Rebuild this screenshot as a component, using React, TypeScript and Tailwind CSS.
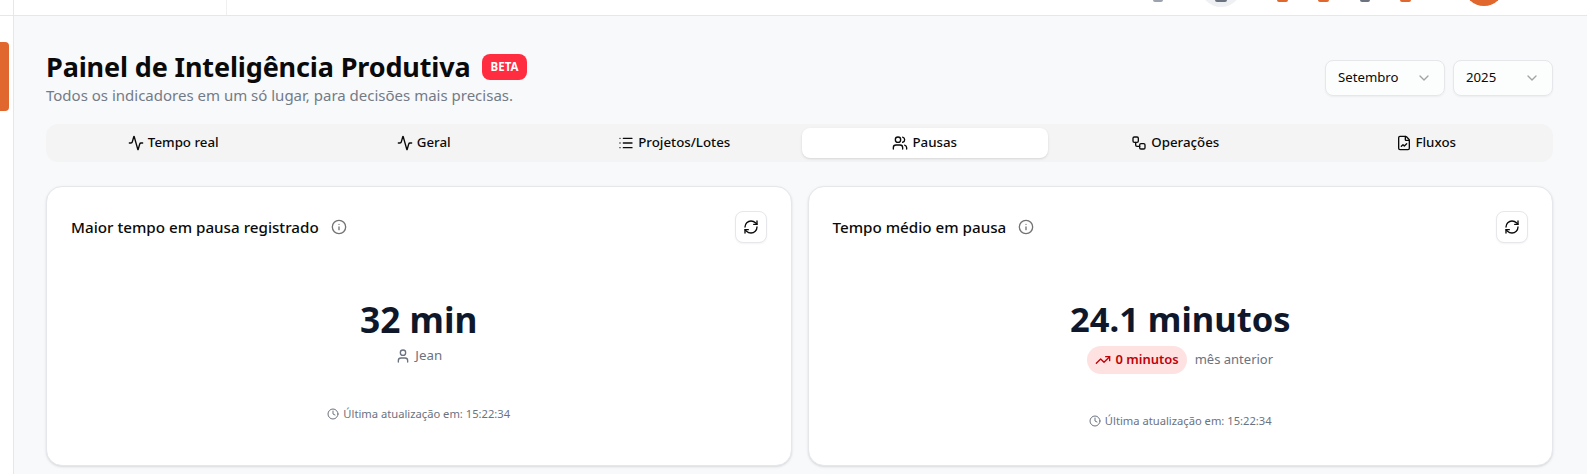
import { Activity, ChevronDown, Clock, FileChartLine, Info, List, RefreshCw, TrendingUp, User, Users, Workflow } from 'lucide-react';

const font = "font-['Noto_Sans','Open_Sans',sans-serif]";

const tabs = [
    { label: 'Tempo real', icon: Activity },
    { label: 'Geral', icon: Activity },
    { label: 'Projetos/Lotes', icon: List },
    { label: 'Pausas', icon: Users, active: true },
    { label: 'Operações', icon: Workflow },
    { label: 'Fluxos', icon: FileChartLine },
];

const Select = ({ value, width }: { value: string; width: string }) => (
    <div className={`${width} h-[36px] flex items-center justify-between px-3 bg-white/60 border border-[#e5e7eb] rounded-lg shadow-xs text-[13.2px] text-[#0a0a0a]`}>
        {value}
        <ChevronDown className="w-4 h-4 text-[#a3a3a3]" />
    </div>
);

const Card = ({ title, children, footerGap }: { title: string; children: React.ReactNode; footerGap: string }) => (
    <div className="flex-1 h-[280px] bg-white rounded-2xl border border-[#e5e7eb] shadow-sm px-6 pt-6 flex flex-col">
        <div className="flex items-center justify-between h-[32px]">
            <div className="flex items-center gap-3">
                <span className="text-[15.2px] font-medium text-[#0a0a0a]">{title}</span>
                <Info className="w-4 h-4 text-[#737373]" />
            </div>
            <button className="w-8 h-8 flex items-center justify-center bg-white border border-[#e5e7eb] rounded-lg shadow-xs">
                <RefreshCw className="w-4 h-4 text-[#0a0a0a]" />
            </button>
        </div>
        <div className="flex flex-col items-center mt-[56px]">
            {children}
            <div className={`${footerGap} flex items-center gap-1 text-[11.2px] text-[#6b7280]`}>
                <Clock className="w-3 h-3" />
                Última atualização em: 15:22:34
            </div>
        </div>
    </div>
);

export default function App() {
    return (
        <div className={`${font} w-[1587px] h-[474px] overflow-hidden flex flex-col bg-[#f8f9fb]`}>
            {/* barra superior: so aparece a base dos icones */}
            <header className="h-[16px] shrink-0 bg-white border-b border-[#e5e7eb] flex">
                <div className="w-[14px] border-r border-[#e5e7eb]" />
                <div className="w-[213px] border-r border-[#f0f0f0]" />
                <div className="flex-1 flex items-start pl-[926px]">
                    <span className="w-[10px] h-[2px] rounded-b-full bg-[#9ca3af]" />
                    <span className="ml-[37px] w-[42px] h-[7px] overflow-hidden flex justify-center">
                        <span className="relative shrink-0 w-[42px] h-[42px] -mt-[35px] rounded-full bg-[#eef0f3] flex items-end justify-center">
                            <span className="absolute top-[35px] w-[12px] h-[2px] rounded-b-full bg-[#6b7280]" />
                        </span>
                    </span>
                    <span className="ml-[35px] w-[11px] h-[2px] rounded-b-full bg-[#e0672d]" />
                    <span className="ml-[30px] w-[11px] h-[2px] rounded-b-full bg-[#e0672d]" />
                    <span className="ml-[31px] w-[10px] h-[2px] rounded-b-full bg-[#6b7280]" />
                    <span className="ml-[30px] w-[11px] h-[2px] rounded-b-full bg-[#e0672d]" />
                    <span className="ml-[56px] w-[34px] h-[6px] overflow-hidden">
                        <span className="block w-[40px] h-[40px] -ml-[3px] -mt-[34px] rounded-full bg-[#e0672d]" />
                    </span>
                </div>
            </header>

            <div className="flex flex-1 min-h-0">
                <aside className="w-[14px] shrink-0 bg-white border-r border-[#e5e7eb] pt-[26px]">
                    <div className="w-[9px] h-[69px] bg-[#e0672d] rounded-r-[4px]" />
                </aside>

                <main className="flex-1 pl-[32px] pr-[34px] pt-[35px]">
                    <div className="flex items-start justify-between">
                        <div>
                            <div className="flex items-center gap-[11px]">
                                <h1 className="text-[27px] leading-[32px] font-bold tracking-[-0.14px] text-[#0a0a0a]">Painel de Inteligência Produtiva</h1>
                                <span className="px-[9px] h-[26px] flex items-center bg-[#ff2d3f] text-white text-[11.5px] font-bold rounded-lg">BETA</span>
                            </div>
                            <p className="mt-[2px] text-[15px] leading-[20px] text-[#737b87]">Todos os indicadores em um só lugar, para decisões mais precisas.</p>
                        </div>
                        <div className="flex gap-2 mt-[9px]">
                            <Select value="Setembro" width="w-[120px]" />
                            <Select value="2025" width="w-[100px]" />
                        </div>
                    </div>

                    <div className="mt-[19px] h-[38px] bg-[#f4f4f5] rounded-xl p-1 flex gap-1">
                        {tabs.map(tab => (
                            <div
                                key={tab.label}
                                className={`flex-1 flex items-center justify-center gap-1 rounded-lg text-[13.3px] font-medium text-[#0a0a0a] ${tab.active ? 'bg-white shadow-sm' : ''}`}
                            >
                                <tab.icon className="w-4 h-4" />
                                {tab.label}
                            </div>
                        ))}
                    </div>

                    <div className="mt-[24px] flex gap-4">
                        <Card title="Maior tempo em pausa registrado" footerGap="mt-[40px]">
                            <div className="text-[35.3px] leading-[40px] font-bold text-[#0f172a]">32 min</div>
                            <div className="mt-[7px] flex items-center gap-1 text-[13.3px] text-[#6b7280]">
                                <User className="w-4 h-4" />
                                Jean
                            </div>
                        </Card>
                        <Card title="Tempo médio em pausa" footerGap="mt-[39px]">
                            <div className="text-[34.5px] leading-[40px] font-bold text-[#0f172a]">24.1 minutos</div>
                            <div className="mt-[7px] flex items-center gap-2 text-[13px]">
                                <span className="h-[28px] px-2 flex items-center gap-1 rounded-full bg-[#fee2e2] text-[#c10007] font-semibold">
                                    <TrendingUp className="w-4 h-4" />
                                    0 minutos
                                </span>
                                <span className="text-[#6b7280]">mês anterior</span>
                            </div>
                        </Card>
                    </div>
                </main>
            </div>
        </div>
    );
}
